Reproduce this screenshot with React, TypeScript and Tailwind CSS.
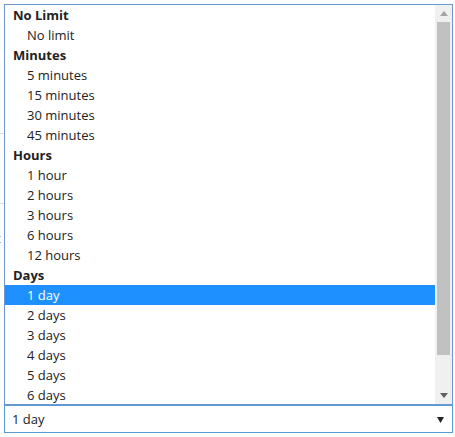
import React from "react";

type Item = { label: string; group?: boolean; selected?: boolean };

const items: Item[] = [
  { label: "No Limit", group: true },
  { label: "No limit" },
  { label: "Minutes", group: true },
  { label: "5 minutes" },
  { label: "15 minutes" },
  { label: "30 minutes" },
  { label: "45 minutes" },
  { label: "Hours", group: true },
  { label: "1 hour" },
  { label: "2 hours" },
  { label: "3 hours" },
  { label: "6 hours" },
  { label: "12 hours" },
  { label: "Days", group: true },
  { label: "1 day", selected: true },
  { label: "2 days" },
  { label: "3 days" },
  { label: "4 days" },
  { label: "5 days" },
  { label: "6 days" },
];

export default function App() {
  return (
    <div
      className="relative w-[455px] h-[437px] bg-white overflow-hidden text-[#222]"
      style={{ fontFamily: '"Open Sans", "Noto Sans", sans-serif' }}
    >
      {/* background content peeking out */}
      <div className="absolute left-0 top-[133px] w-[20px] h-px bg-[#dcdcdc]" />
      <div className="absolute left-0 top-[203px] w-[20px] h-px bg-[#dcdcdc]" />
      <div className="absolute left-[-4px] top-[228px] text-[13px] leading-[20px]">t</div>

      {/* dropdown list */}
      <div className="absolute left-[4px] top-[4px] w-[449px] h-[401px] border border-[#7096d2] bg-white flex overflow-hidden">
        <div className="flex-1 flex flex-col">
          {items.map((it, i) => (
            <div
              key={i}
              className={
                "h-[20px] shrink-0 flex items-center pt-[2px] text-[13px] " +
                (it.group ? "pl-[8px] font-bold " : "pl-[22px] ") +
                (it.selected ? "bg-[#1e90ff] text-white" : "")
              }
            >
              {it.label}
            </div>
          ))}
        </div>
        <div className="w-[17px] bg-[#f0f0f0] flex flex-col items-center shrink-0">
          <div className="h-[17px] w-full flex items-center justify-center">
            <svg width="8" height="5" viewBox="0 0 8 5">
              <polygon points="0,5 8,5 4,0" fill="#a3a3a3" />
            </svg>
          </div>
          <div className="w-[13px] h-[333px] bg-[#c1c1c1]" />
          <div className="flex-1" />
          <div className="h-[17px] w-full flex items-center justify-center">
            <svg width="8" height="5" viewBox="0 0 8 5">
              <polygon points="0,0 8,0 4,5" fill="#606060" />
            </svg>
          </div>
        </div>
      </div>

      {/* select box */}
      <div className="absolute left-[4px] top-[405px] w-[449px] h-[28px] border border-[#5b9bd5] bg-white flex items-center justify-between pl-[7px] pr-[8px] pt-[2px] text-[13px]">
        <span>1 day</span>
        <svg width="7" height="6" viewBox="0 0 7 6">
          <polygon points="0,0 7,0 3.5,6" fill="#222" />
        </svg>
      </div>
    </div>
  );
}
